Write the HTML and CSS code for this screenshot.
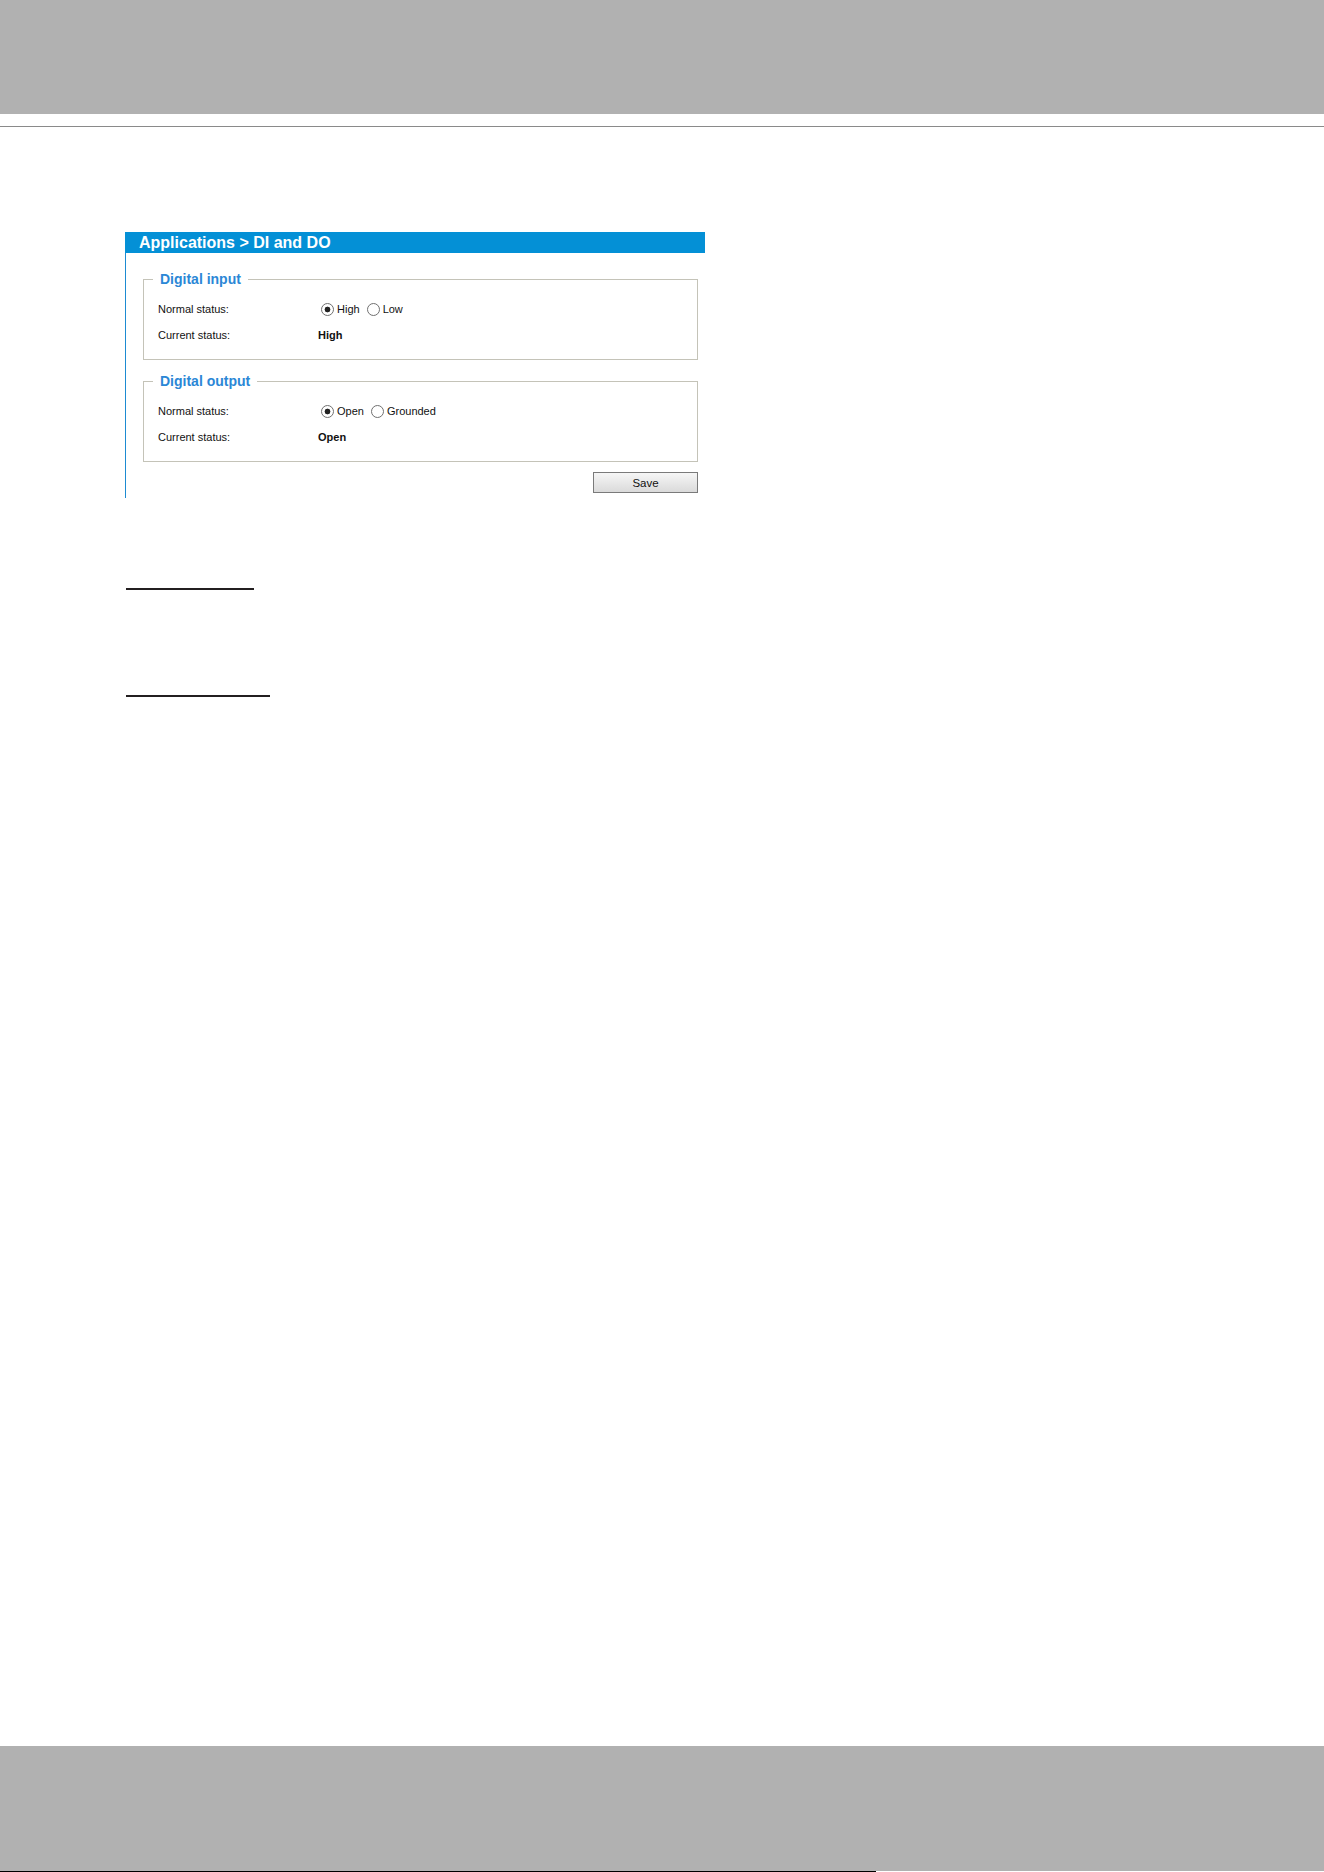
FILE: index.html
```html
<!DOCTYPE html>
<html lang="en">
<head>
<meta charset="utf-8">
<title>Applications &gt; DI and DO</title>
<link rel="stylesheet" href="styles.css">
</head>
<body>
<div class="page">
  <header class="top-bar"></header>
  <div class="rule"></div>
  <main class="content">
    <section class="panel">
      <h1 class="panel-title">Applications &gt; DI and DO</h1>
      <div class="panel-body">
        <fieldset class="group">
          <legend class="group-title">Digital input</legend>
          <div class="row">
            <span class="label">Normal status:</span>
            <span class="value">
              <label class="option"><input class="radio" type="radio" name="di" checked>High</label>
              <label class="option"><input class="radio" type="radio" name="di">Low</label>
            </span>
          </div>
          <div class="row">
            <span class="label">Current status:</span>
            <span class="value strong">High</span>
          </div>
        </fieldset>
        <fieldset class="group">
          <legend class="group-title">Digital output</legend>
          <div class="row">
            <span class="label">Normal status:</span>
            <span class="value">
              <label class="option"><input class="radio" type="radio" name="do" checked>Open</label>
              <label class="option"><input class="radio" type="radio" name="do">Grounded</label>
            </span>
          </div>
          <div class="row">
            <span class="label">Current status:</span>
            <span class="value strong">Open</span>
          </div>
        </fieldset>
        <div class="actions">
          <button class="btn" type="button">Save</button>
        </div>
      </div>
    </section>
    <div class="heading-line short"></div>
    <div class="heading-line long"></div>
  </main>
  <footer class="bottom-bar">
    <div class="bottom-fill"></div>
    <div class="bottom-edge"></div>
  </footer>
</div>
</body>
</html>
```

FILE: styles.css
```css
html, body {
  margin: 0;
  padding: 0;
}

body {
  font-family: "Liberation Sans", Arial, sans-serif;
  color: #111;
  background: #fff;
}

.page {
  min-height: 100vh;
  display: flex;
  flex-direction: column;
}

.top-bar {
  height: 114px;
  background: #b1b1b1;
}

.rule {
  height: 1px;
  margin-top: 12px;
  background: #8a8a8a;
}

.content {
  flex: 1;
  padding: 105px 0 0 125px;
}

.panel {
  width: 580px;
}

.panel-title {
  margin: 0;
  height: 21px;
  line-height: 21px;
  padding-left: 14px;
  background: #0490d6;
  color: #fff;
  font-size: 16px;
  font-weight: bold;
}

.panel-body {
  border-left: 1px solid #1d8bd2;
  padding: 18px 7px 5px 17px;
}

.group {
  margin: 0;
  min-width: 0;
  border: 1px solid #c4c3b8;
  padding: 9px 14px 11px 14px;
}

.group + .group {
  margin-top: 13px;
}

.group-title {
  margin-left: -5px;
  padding: 0 7px;
  font-size: 14px;
  line-height: 16px;
  font-weight: bold;
  color: #2b87d6;
}

.row {
  display: flex;
  height: 26px;
  line-height: 26px;
  font-size: 11px;
  color: #111;
}

.label {
  width: 160px;
  flex: none;
}

.value {
  display: flex;
  align-items: center;
}

.strong {
  font-weight: bold;
}

.option {
  display: inline-flex;
  align-items: center;
  margin-right: 4px;
}

.radio {
  -webkit-appearance: none;
  appearance: none;
  box-sizing: border-box;
  width: 13px;
  height: 13px;
  margin: 0 3px;
  border: 1px solid #707070;
  border-radius: 50%;
  background: #fff;
}

.radio:checked {
  background: radial-gradient(circle, #222 0, #222 2.6px, #fff 3.2px);
}

.actions {
  display: flex;
  justify-content: flex-end;
  margin-top: 10px;
}

.btn {
  box-sizing: border-box;
  width: 105px;
  height: 21px;
  padding: 0;
  border: 1px solid #7a7a7a;
  background: linear-gradient(#f6f6f6, #dadada);
  font-family: "Liberation Sans", Arial, sans-serif;
  font-size: 11.5px;
  color: #111;
}

.heading-line {
  height: 2px;
  margin-left: 1px;
  background: #231f20;
}

.heading-line.short {
  width: 128px;
  margin-top: 90px;
}

.heading-line.long {
  width: 144px;
  margin-top: 105px;
}

.bottom-bar {
  height: 126px;
  display: flex;
  flex-direction: column;
}

.bottom-fill {
  flex: 1;
  background: #b1b1b1;
}

.bottom-edge {
  height: 1px;
  background: linear-gradient(to right, #000 0, #000 876px, #fff 876px);
}
```
